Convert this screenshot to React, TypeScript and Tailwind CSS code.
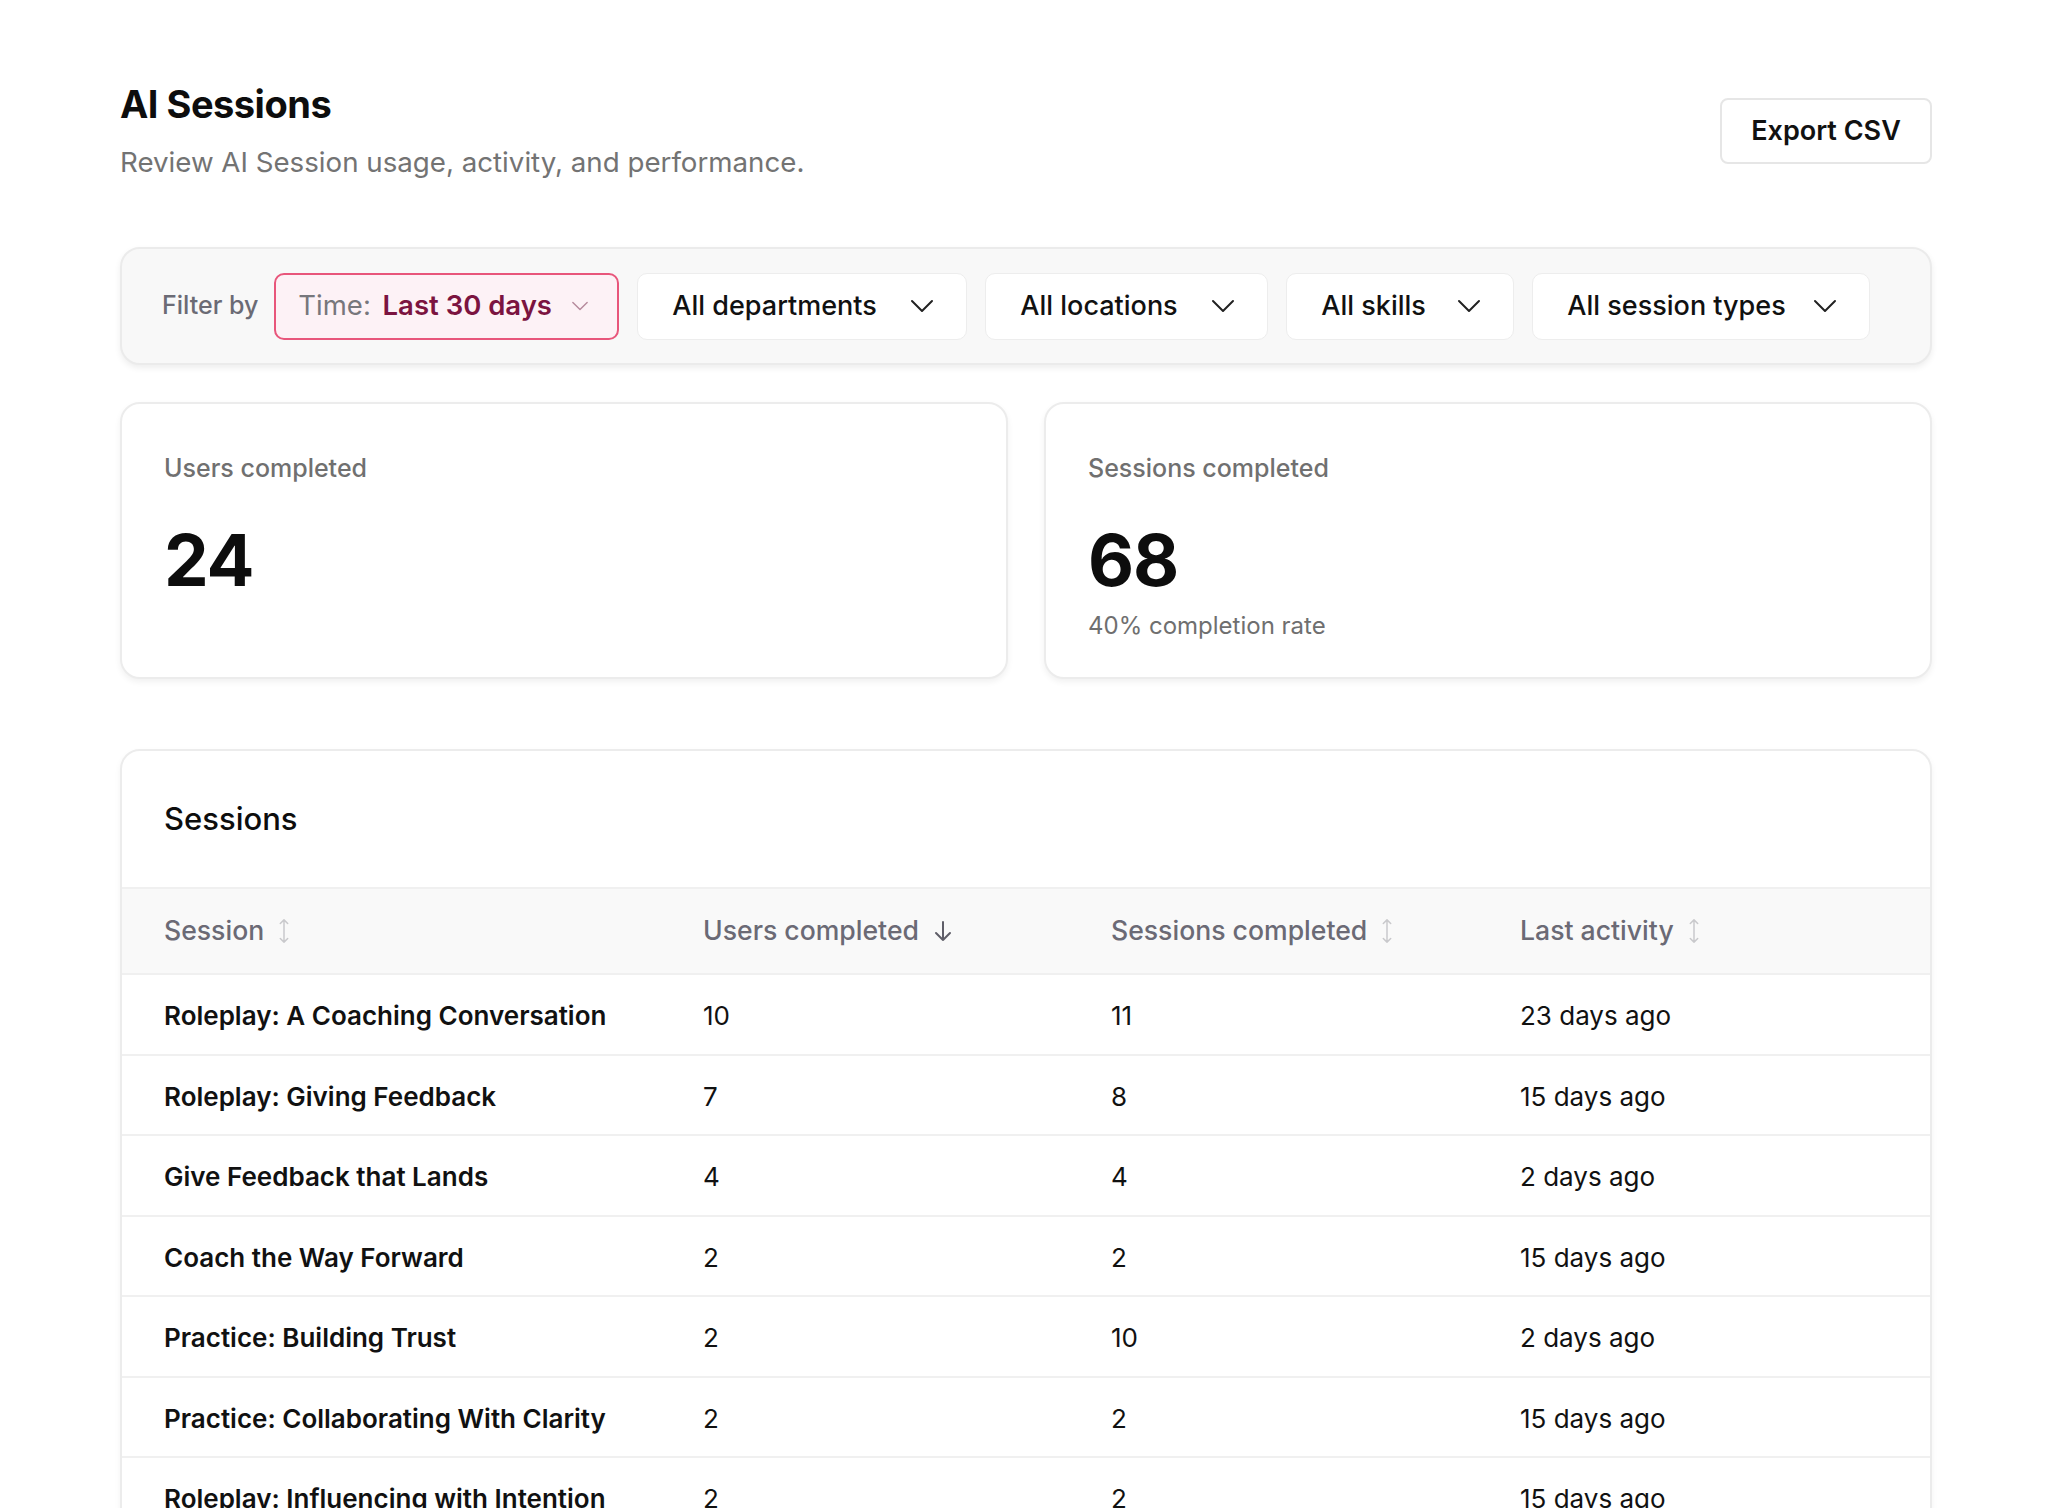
import React from "react"

const font = { fontFamily: "Inter, 'Noto Sans', sans-serif" }

interface Row {
    name: string
    users: number
    sessions: number
    last: string
}

const rows: Row[] = [
    { name: "Roleplay: A Coaching Conversation", users: 10, sessions: 11, last: "23 days ago" },
    { name: "Roleplay: Giving Feedback", users: 7, sessions: 8, last: "15 days ago" },
    { name: "Give Feedback that Lands", users: 4, sessions: 4, last: "2 days ago" },
    { name: "Coach the Way Forward", users: 2, sessions: 2, last: "15 days ago" },
    { name: "Practice: Building Trust", users: 2, sessions: 10, last: "2 days ago" },
    { name: "Practice: Collaborating With Clarity", users: 2, sessions: 2, last: "15 days ago" },
    { name: "Roleplay: Influencing with Intention", users: 2, sessions: 2, last: "15 days ago" },
    { name: "Practice: Navigating Change", users: 1, sessions: 1, last: "30 days ago" },
]

const Chevron = ({ className }: { className?: string }) => (
    <svg viewBox="0 0 24 14" fill="none" className={className}>
        <polyline points="2,2 12,12 22,2" stroke="currentColor" strokeWidth="2" strokeLinecap="round" strokeLinejoin="round" />
    </svg>
)

const SortBoth = () => (
    <svg viewBox="0 0 12 28" fill="none" className="w-[12px] h-[26px] text-[#c9c9cc]">
        <path d="M6 2v24M2 6l4-4 4 4M2 22l4 4 4-4" stroke="currentColor" strokeWidth="1.6" strokeLinecap="round" strokeLinejoin="round" />
    </svg>
)

const SortDown = () => (
    <svg viewBox="0 0 20 22" fill="none" className="w-[20px] h-[22px] text-[#5f5e68]">
        <path d="M10 2v18M3 13l7 7 7-7" stroke="currentColor" strokeWidth="2" strokeLinecap="round" strokeLinejoin="round" />
    </svg>
)

const Dropdown = ({ label, width }: { label: string; width: string }) => (
    <button className={`flex h-[67px] items-center justify-between rounded-[10px] border border-[#ededed] bg-white pl-[34px] pr-[32px] text-[27px] font-medium text-[#111] ${width}`}>
        <span>{label}</span>
        <Chevron className="w-[24px] h-[14px] text-[#222]" />
    </button>
)

const StatCard = ({ label, value, note }: { label: string; value: string; note?: string }) => (
    <div className="flex-1 h-[277px] rounded-[20px] border-2 border-[#ececec] bg-white px-[42px] pt-[48px] shadow-[0_3px_6px_rgba(0,0,0,0.06)]">
        <div className="text-[25px] leading-[32px] font-medium text-[#707070]">{label}</div>
        <div className="mt-[36px] text-[71px] leading-[80px] font-bold tracking-[-1px] text-[#0d0d0d]">{value}</div>
        {note && <div className="mt-[10px] text-[24px] leading-[32px] text-[#6f6f6f]">{note}</div>}
    </div>
)

const App: React.FC = () => {
    return (
        <div className="min-h-screen bg-white px-[120px] pt-[80px] pb-[60px]" style={font}>
            <div className="flex items-start justify-between">
                <div>
                    <h1 className="text-[38px] leading-[48px] font-bold tracking-[-0.5px] text-[#0d0d0d]">AI Sessions</h1>
                    <p className="mt-[16px] text-[27.7px] leading-[36px] text-[#737373]">Review AI Session usage, activity, and performance.</p>
                </div>
                <button className="mt-[18px] h-[66px] w-[212px] rounded-[8px] border-2 border-[#e6e6e6] bg-white text-[27px] font-semibold text-[#111]">Export CSV</button>
            </div>

            <div className="mt-[67px] flex h-[118px] items-center gap-[18px] rounded-[20px] border-2 border-[#ebebeb] bg-[#f8f8f8] px-[40px] shadow-[0_3px_6px_rgba(0,0,0,0.07)]">
                <span className="mr-[-2px] text-[25px] font-medium text-[#6b6b75]">Filter by</span>
                <button className="flex h-[67px] w-[345px] items-center justify-between rounded-[10px] border-2 border-[#e8567b] bg-[#fdf2f6] pl-[22px] pr-[28px] text-[27.5px]">
                    <span>
                        <span className="text-[#77777c]">Time: </span>
                        <span className="ml-[4px] font-semibold text-[#7b1440]">Last 30 days</span>
                    </span>
                    <Chevron className="w-[18px] h-[10px] text-[#b68a9c]" />
                </button>
                <Dropdown label="All departments" width="w-[330px]" />
                <Dropdown label="All locations" width="w-[283px]" />
                <Dropdown label="All skills" width="w-[228px]" />
                <Dropdown label="All session types" width="w-[338px]" />
            </div>

            <div className="mt-[37px] flex gap-[36px]">
                <StatCard label="Users completed" value="24" />
                <StatCard label="Sessions completed" value="68" note="40% completion rate" />
            </div>

            <div className="mt-[70px] overflow-hidden rounded-[20px] border-2 border-[#ececec] bg-white shadow-[0_3px_6px_rgba(0,0,0,0.05)]">
                <div className="flex h-[136px] items-center px-[42px] text-[31px] font-medium text-[#0d0d0d]">Sessions</div>
                <div className="grid h-[88px] grid-cols-[539px_408px_409px_1fr] items-center border-y-2 border-[#f0f0f0] bg-[#f9f9f9] px-[42px] text-[26.6px] font-medium text-[#6b6a75]">
                    <div className="flex items-center gap-[14px]">Session <SortBoth /></div>
                    <div className="flex items-center gap-[14px]">Users completed <SortDown /></div>
                    <div className="flex items-center gap-[14px]">Sessions completed <SortBoth /></div>
                    <div className="flex items-center gap-[14px]">Last activity <SortBoth /></div>
                </div>
                {rows.map((r) => (
                    <div key={r.name} className="grid h-[80.5px] grid-cols-[539px_408px_409px_1fr] items-center border-b-2 border-[#f0f0f0] px-[42px] pt-[3px] text-[26px] text-[#111]">
                        <div className="font-semibold">{r.name}</div>
                        <div>{r.users}</div>
                        <div>{r.sessions}</div>
                        <div>{r.last}</div>
                    </div>
                ))}
            </div>
        </div>
    )
}

export default App
